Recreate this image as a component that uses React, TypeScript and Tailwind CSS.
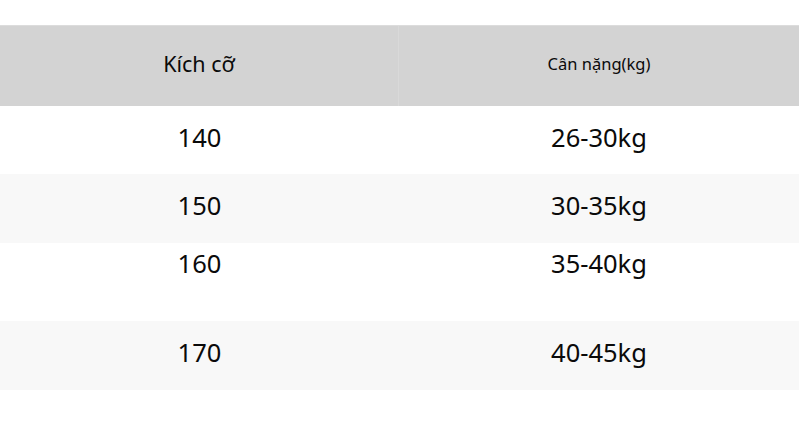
import React from "react";

const rows = [
  { size: "140", weight: "26-30kg", bg: "bg-white", h: "h-[68px]", align: "items-center pb-[6px]" },
  { size: "150", weight: "30-35kg", bg: "bg-[#f8f8f8]", h: "h-[69px]", align: "items-center pb-[6px]" },
  { size: "160", weight: "35-40kg", bg: "bg-white", h: "h-[78px]", align: "items-start pt-[1px]" },
  { size: "170", weight: "40-45kg", bg: "bg-[#f8f8f8]", h: "h-[69px]", align: "items-center pb-[6px]" },
];

export default function App() {
  return (
    <div
      className="w-[800px] h-[445px] bg-white pt-[25px] text-[#0a0a0a]"
      style={{ fontFamily: '"Noto Sans", "Open Sans", sans-serif' }}
    >
      <div className="w-[799px]">
        <div className="flex h-[81px] bg-[#d3d3d3] border-t border-[#dcdcdc]">
          <div className="w-[399px] flex items-center justify-center pb-[4px] text-[21.5px] border-r border-[#d9d9d9]">
            Kích cỡ
          </div>
          <div className="flex-1 flex items-center justify-center pb-[4px] text-[16.5px]">
            Cân nặng(kg)
          </div>
        </div>
        {rows.map((r) => (
          <div key={r.size} className={`flex ${r.bg} ${r.h} ${r.align} text-[25.5px]`}>
            <div className="w-[399px] flex justify-center">{r.size}</div>
            <div className="flex-1 flex justify-center">{r.weight}</div>
          </div>
        ))}
      </div>
    </div>
  );
}
